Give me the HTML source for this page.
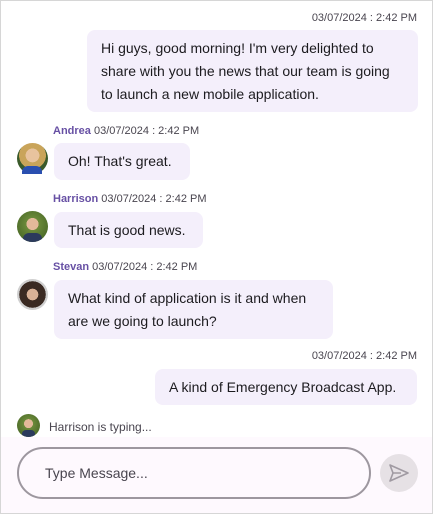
<!DOCTYPE html>
<html><head><meta charset="utf-8"><style>
*{margin:0;padding:0;box-sizing:border-box}
body{width:433px;height:514px;overflow:hidden;background:#fff;font-family:"Liberation Sans",sans-serif;color:#1c1b1f;position:relative}
.frame{position:absolute;left:0;top:0;width:433px;height:514px;border:1px solid #d6d6d6}
.a{position:absolute}
.ts{font-size:11px;color:#49454f;white-space:nowrap}
.nm{font-weight:bold;color:#6750a4}
.b{position:absolute;background:#f4effb;border-radius:8px;font-size:14px;line-height:23px;padding:7px 14px;white-space:nowrap}
.av{position:absolute;border-radius:50%;overflow:hidden}
</style></head><body>
<div class="a" style="left:1px;top:437px;width:431px;height:76px;background:#fef9fe"></div>
<div class="frame"></div>

<div class="a ts" style="right:16px;top:12px">03/07/2024 : 2:42 PM</div>
<div class="b" style="left:87px;top:30px;width:331px;height:82px;padding:7px 14px">Hi guys, good morning! I'm very delighted to<br>share with you the news that our team is going<br>to launch a new mobile application.</div>

<div class="a ts" style="left:53px;top:125px"><span class="nm">Andrea</span> 03/07/2024 : 2:42 PM</div>
<div class="av" style="left:17px;top:143px;width:31px;height:31px;background:radial-gradient(circle at 50% 40%,#e8c39e 0 28%,#c9a45a 29% 55%,#3a5a2a 56%);"></div>
<div class="a" style="left:22px;top:166px;width:20px;height:8px;background:#2a4fb0;border-radius:6px 6px 0 0"></div>
<div class="b" style="left:54px;top:143px;width:136px;height:37px">Oh! That's great.</div>

<div class="a ts" style="left:53px;top:193px"><span class="nm">Harrison</span> 03/07/2024 : 2:42 PM</div>
<div class="av" style="left:17px;top:211px;width:31px;height:31px;background:radial-gradient(circle at 50% 42%,#e3b99a 0 25%,#6b8a3a 26%,#4f6e2a 70%)"><div style="position:absolute;left:6px;top:22px;width:19px;height:10px;background:#2b3a5c;border-radius:6px 6px 0 0"></div></div>
<div class="b" style="left:54px;top:212px;width:149px;height:36px">That is good news.</div>

<div class="a ts" style="left:53px;top:261px"><span class="nm">Stevan</span> 03/07/2024 : 2:42 PM</div>
<div class="av" style="left:17px;top:279px;width:31px;height:31px;background:radial-gradient(circle at 50% 50%,#d9b196 0 26%,#3a2a22 27% 60%,#cfcfcf 61%)"></div>
<div class="b" style="left:54px;top:280px;width:279px;height:59px">What kind of application is it and when<br>are we going to launch?</div>

<div class="a ts" style="right:16px;top:350px">03/07/2024 : 2:42 PM</div>
<div class="b" style="left:155px;top:369px;width:262px;height:36px">A kind of Emergency Broadcast App.</div>

<div class="av" style="left:17px;top:414px;width:23px;height:23px;background:radial-gradient(circle at 50% 42%,#e3b99a 0 25%,#6b8a3a 26%,#4f6e2a 70%)"><div style="position:absolute;left:5px;top:16px;width:13px;height:7px;background:#2b3a5c;border-radius:4px 4px 0 0"></div></div>
<div class="a" style="left:49px;top:420px;font-size:12px;color:#49454f">Harrison is typing...</div>

<div class="a" style="left:17px;top:447px;width:354px;height:52px;border:2px solid #9d979f;border-radius:26px;font-size:14px;color:#49454f;padding:16px 0 0 26px">Type Message...</div>
<div class="a" style="left:380px;top:454px;width:38px;height:38px;border-radius:50%;background:#e6e1e5"></div>
<svg class="a" style="left:388px;top:463px" width="22" height="20" viewBox="0 0 22 20"><path d="M2 2 L20 10 L2 18 L5 10 Z M5 10 H13" fill="none" stroke="#a09aa2" stroke-width="1.6" stroke-linejoin="round"/></svg>
</body></html>
